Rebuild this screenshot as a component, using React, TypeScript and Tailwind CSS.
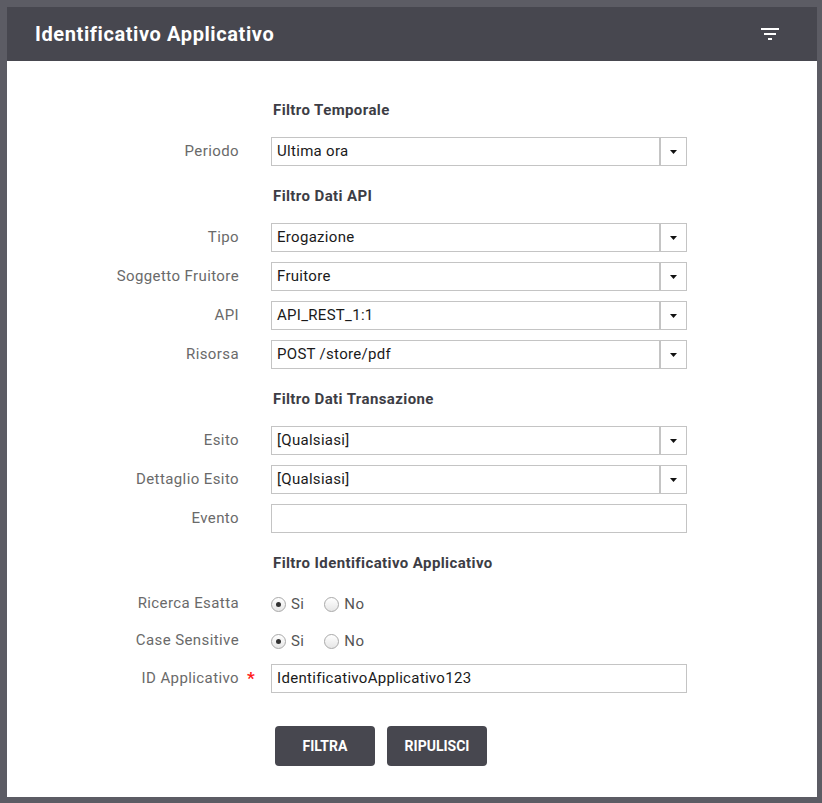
const font = { fontFamily: "Roboto, 'Liberation Sans', sans-serif" };

type Row =
  | { kind: "heading"; text: string }
  | { kind: "select"; label: string; value: string }
  | { kind: "input"; label: string; value: string; required?: boolean }
  | { kind: "radio"; label: string };

const rows: Row[] = [
  { kind: "heading", text: "Filtro Temporale" },
  { kind: "select", label: "Periodo", value: "Ultima ora" },
  { kind: "heading", text: "Filtro Dati API" },
  { kind: "select", label: "Tipo", value: "Erogazione" },
  { kind: "select", label: "Soggetto Fruitore", value: "Fruitore" },
  { kind: "select", label: "API", value: "API_REST_1:1" },
  { kind: "select", label: "Risorsa", value: "POST /store/pdf" },
  { kind: "heading", text: "Filtro Dati Transazione" },
  { kind: "select", label: "Esito", value: "[Qualsiasi]" },
  { kind: "select", label: "Dettaglio Esito", value: "[Qualsiasi]" },
  { kind: "input", label: "Evento", value: "" },
  { kind: "heading", text: "Filtro Identificativo Applicativo" },
  { kind: "radio", label: "Ricerca Esatta" },
  { kind: "radio", label: "Case Sensitive" },
  { kind: "input", label: "ID Applicativo", value: "IdentificativoApplicativo123", required: true },
];

function FilterIcon() {
  return (
    <svg width="18" height="12" viewBox="0 0 18 12" fill="#ffffff">
      <rect x="0" y="0" width="18" height="2" />
      <rect x="3" y="5" width="12" height="2" />
      <rect x="7" y="10" width="4" height="2" />
    </svg>
  );
}

function Radio({ checked, label }: { checked: boolean; label: string }) {
  return (
    <label className="flex items-center gap-[5px] text-[15px] tracking-[0.4px] text-[#555]">
      <span className="w-[15px] h-[15px] rounded-full border border-[#a9a9a9] bg-gradient-to-b from-[#ffffff] to-[#e6e6e6] flex items-center justify-center">
        {checked && <span className="w-[5px] h-[5px] rounded-full bg-[#333]" />}
      </span>
      {label}
    </label>
  );
}

function Label({ text, required }: { text: string; required?: boolean }) {
  return (
    <div className="w-[264px] shrink-0 flex items-center">
      <div className="w-[232px] text-right text-[15px] tracking-[0.4px] text-[#6a6a6a]">{text}</div>
      {required && <span className="pl-[8px] text-[17px] font-bold text-[#ff1a1a] leading-none">*</span>}
    </div>
  );
}

export default function App() {
  return (
    <div style={font} className="w-[822px] h-[803px] bg-[#5c5c64] p-[7px] pr-[5px] pb-[6px]">
      <div className="bg-white h-full flex flex-col">
        <div className="h-[54px] bg-[#47474f] flex items-center justify-between pl-[28px] pr-[38px]">
          <h1 className="text-[20px] font-bold text-white tracking-[0.6px]">Identificativo Applicativo</h1>
          <FilterIcon />
        </div>

        <div className="flex flex-col pt-[29px]">
          {rows.map((row, i) => {
            if (row.kind === "heading") {
              return (
                <div key={i} className="pl-[266px] pt-[10px] pb-[17px]">
                  <h2 className="h-[20px] leading-[20px] text-[15px] font-bold tracking-[0.4px] text-[#3d3d45]">{row.text}</h2>
                </div>
              );
            }
            if (row.kind === "radio") {
              return (
                <div key={i} className="flex h-[27px] mb-[10px]">
                  <Label text={row.label} />
                  <div className="flex items-center gap-[20px] pt-[2px]">
                    <Radio checked label="Si" />
                    <Radio checked={false} label="No" />
                  </div>
                </div>
              );
            }
            return (
              <div key={i} className="flex h-[29px] mb-[10px]">
                <Label text={row.label} required={row.kind === "input" && row.required} />
                <div className="w-[416px] h-[29px] border border-[#c4c4c4] flex">
                  <div className="flex-1 flex items-center pl-[5px] text-[15px] tracking-[0.3px] text-[#1a1a1a]">{row.value}</div>
                  {row.kind === "select" && (
                    <div className="w-[27px] border-l-2 border-[#c4c4c4] flex items-center justify-center">
                      <svg width="7" height="4" viewBox="0 0 7 4">
                        <path d="M0 0 H7 L3.5 4 Z" fill="#111" />
                      </svg>
                    </div>
                  )}
                </div>
              </div>
            );
          })}

          <div className="flex gap-[12px] pl-[268px] mt-[23px]">
            <button className="w-[100px] h-[40px] rounded-[4px] bg-[#47474f] text-white text-[14px] font-bold">FILTRA</button>
            <button className="w-[100px] h-[40px] rounded-[4px] bg-[#47474f] text-white text-[14px] font-bold">RIPULISCI</button>
          </div>
        </div>
      </div>
    </div>
  );
}
